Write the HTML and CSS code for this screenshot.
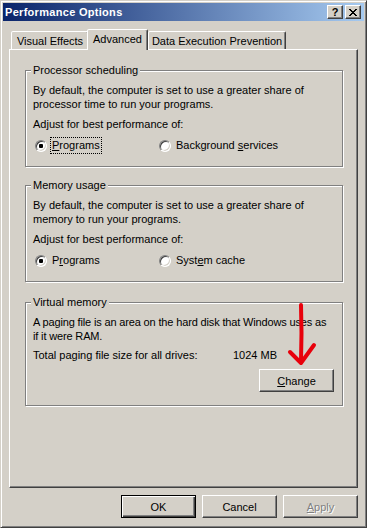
FILE: index.html
```html
<!DOCTYPE html>
<html>
<head>
<meta charset="utf-8">
<title>Performance Options</title>
<link rel="stylesheet" href="styles.css">
</head>
<body>
<div class="window">
  <div class="titlebar">
    <span class="title">Performance Options</span>
    <div class="caption-btns">
      <div class="cap-btn help">?</div>
      <div class="cap-btn close"><svg width="8" height="7" viewBox="0 0 8 7" shape-rendering="crispEdges"><path d="M0 0h2v1H0zM6 0h2v1H6zM1 1h2v1H1zM5 1h2v1H5zM2 2h4v1H2zM3 3h2v1H3zM2 4h4v1H2zM1 5h2v1H1zM5 5h2v1H5zM0 6h2v1H0zM6 6h2v1H6z" fill="#000"/></svg></div>
    </div>
  </div>
  <div class="content">
    <div class="tabs">
      <div class="tab t1">Visual Effects</div>
      <div class="tab t2 active">Advanced</div>
      <div class="tab t3">Data Execution Prevention</div>
    </div>
    <div class="panel">
      <fieldset class="group g1">
        <legend>Processor scheduling</legend>
        <p class="desc">By default, the computer is set to use a greater share of<br>processor time to run your programs.</p>
        <p class="adjust">Adjust for best performance of:</p>
        <div class="radios">
          <div class="radio first"><span class="dot checked"></span><span class="lbl focus"><u>P</u>rograms</span></div>
          <div class="radio"><span class="dot"></span><span class="lbl">Background <u>s</u>ervices</span></div>
        </div>
      </fieldset>
      <fieldset class="group g2">
        <legend>Memory usage</legend>
        <p class="desc">By default, the computer is set to use a greater share of<br>memory to run your programs.</p>
        <p class="adjust">Adjust for best performance of:</p>
        <div class="radios">
          <div class="radio first"><span class="dot checked"></span><span class="lbl">P<u>r</u>ograms</span></div>
          <div class="radio"><span class="dot"></span><span class="lbl">Syst<u>e</u>m cache</span></div>
        </div>
      </fieldset>
      <fieldset class="group g3">
        <legend>Virtual memory</legend>
        <p class="desc">A paging file is an area on the hard disk that Windows uses as<br>if it were RAM.</p>
        <div class="total"><span class="total-label">Total paging file size for all drives:</span><span>1024 MB</span></div>
        <div class="change-row"><div class="btn"><u>C</u>hange</div></div>
      </fieldset>
    </div>
    <div class="footer">
      <div class="btn default">OK</div>
      <div class="btn">Cancel</div>
      <div class="btn disabled"><u>A</u>pply</div>
    </div>
  </div>
  <svg class="arrow" width="32" height="64" viewBox="0 0 32 64">
    <path d="M15 2 L15.5 30 L15 58" fill="none" stroke="#e8000b" stroke-width="4" stroke-linecap="round"/>
    <path d="M4 49 L15 60 L28 42" fill="none" stroke="#e8000b" stroke-width="4" stroke-linecap="round" stroke-linejoin="round"/>
  </svg>
</div>
</body>
</html>
```
FILE: styles.css
```css
* { box-sizing: border-box; }
html, body { margin: 0; padding: 0; background: #d4d0c8; }
body {
  font-family: "Liberation Sans", Arial, sans-serif;
  font-size: 11px;
  color: #000;
}
.window {
  position: relative;
  width: 367px;
  height: 528px;
  background: #d4d0c8;
  border: 1px solid;
  border-color: #d4d0c8 #404040 #404040 #d4d0c8;
  box-shadow: inset 1px 1px #fff, inset -1px -1px #808080;
  padding: 2px;
  display: flex;
  flex-direction: column;
}
.titlebar {
  height: 18px;
  display: flex;
  align-items: center;
  justify-content: space-between;
  padding: 0 3px 0 2px;
  background: linear-gradient(to right, #0a246a, #a6caf0);
}
.title {
  color: #fff;
  font-weight: bold;
  font-size: 11px;
  letter-spacing: 0.3px;
}
.caption-btns { display: flex; gap: 2px; }
.cap-btn {
  width: 16px;
  height: 14px;
  background: #d4d0c8;
  border: 1px solid;
  border-color: #fff #404040 #404040 #fff;
  box-shadow: inset -1px -1px #808080;
  display: flex;
  align-items: center;
  justify-content: center;
  font-weight: bold;
  font-size: 11px;
  line-height: 12px;
}
.content {
  padding: 0 6px;
  display: flex;
  flex-direction: column;
}
.tabs {
  margin-top: 8px;
  padding-left: 2px;
  height: 20px;
  display: flex;
  align-items: flex-end;
}
.tab {
  height: 18px;
  border: 1px solid;
  border-bottom: 0;
  border-color: #fff #404040 transparent #fff;
  box-shadow: inset -1px 0 #808080;
  border-radius: 2px 2px 0 0;
  display: flex;
  align-items: center;
  justify-content: center;
  background: #d4d0c8;
  white-space: nowrap;
}
.t1 { width: 78px; }
.t2 {
  width: 61px;
  height: 21px;
  margin-left: -2px;
  margin-bottom: -1px;
  padding-bottom: 3px;
  position: relative;
  z-index: 1;
}
.t3 { width: 138px; }
.panel {
  height: 439px;
  border: 1px solid;
  border-color: #fff #404040 #404040 #fff;
  box-shadow: inset -1px -1px #808080;
  padding: 0 14px 0 15px;
}
.group {
  margin: 12px 0 0;
  min-inline-size: 0;
  padding: 6px 8px 13px 7px;
  border: 1px solid #808080;
  box-shadow: inset 1px 1px #fff, 1px 1px #fff;
}
.g1 { margin-top: 14px; }
.g3 { margin-top: 14px; }
.group legend {
  padding: 0 2px;
  margin-left: -2px;
  line-height: 13px;
  background: #d4d0c8;
}
p { margin: 0; line-height: 14px; }
.desc { white-space: nowrap; }
.g3 .desc { letter-spacing: -0.15px; }
.adjust { margin-top: 6px; }
.radios {
  margin-top: 7px;
  padding-left: 2px;
  display: flex;
}
.radio { display: flex; align-items: center; gap: 4px; }
.radio.first { width: 124px; }
.dot {
  width: 12px;
  height: 12px;
  border-radius: 50%;
  border: 1px solid;
  border-color: #808080 #fff #fff #808080;
  background: #fff;
  box-shadow: inset 1px 1px #404040, inset -1px -1px #d4d0c8;
  display: grid;
  place-items: center;
}
.dot.checked::after {
  content: "";
  width: 4px;
  height: 4px;
  background: #000;
  border-radius: 1px;
}
.lbl {
  line-height: 13px;
  padding: 1px 1px;
}
.lbl.focus { outline: 1px dotted #000; outline-offset: 0; }
.total { margin-top: 5px; line-height: 14px; display: flex; white-space: nowrap; }
.total-label { width: 200px; }
.change-row { margin-top: 7px; display: flex; justify-content: flex-end; }
.btn {
  width: 75px;
  height: 23px;
  background: #d4d0c8;
  border: 1px solid;
  border-color: #fff #404040 #404040 #fff;
  box-shadow: inset -1px -1px #808080;
  display: flex;
  align-items: center;
  justify-content: center;
  color: #000;
}
.btn.default {
  border-color: #000;
  box-shadow: inset 1px 1px #fff, inset -1px -1px #404040, inset -2px -2px #808080;
}
.btn.disabled { color: #808080; text-shadow: 1px 1px #fff; }
.footer {
  margin-top: 7px;
  display: flex;
  justify-content: flex-end;
  gap: 6px;
}
.arrow {
  position: absolute;
  left: 285px;
  top: 302px;
}
```
